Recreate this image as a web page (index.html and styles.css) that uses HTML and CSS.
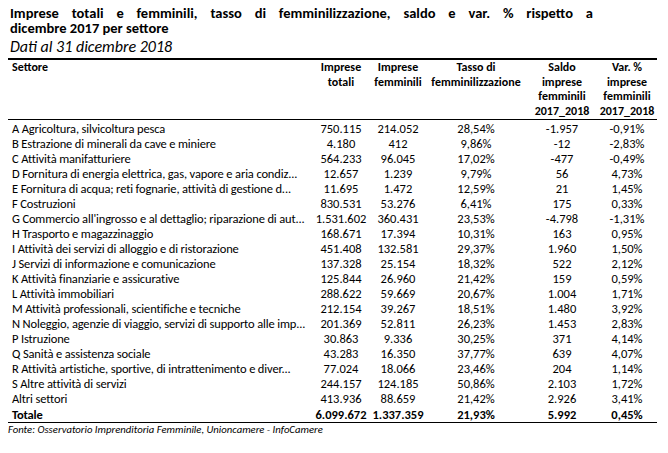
FILE: index.html
```html
<!DOCTYPE html>
<html lang="it">
<head>
<meta charset="utf-8">
<title>Imprese totali e femminili</title>
<link rel="stylesheet" href="styles.css">
</head>
<body>
<div class="page">
  <h1 class="title"><span class="title-line1">Imprese totali e femminili, tasso di femminilizzazione, saldo e var. % rispetto a</span><span class="title-line2">dicembre 2017 per settore</span></h1>
  <p class="subtitle">Dati al 31 dicembre 2018</p>
  <table class="data">
    <colgroup>
      <col class="c-set"><col class="c-tot"><col class="c-fem"><col class="c-tas"><col class="c-sal"><col class="c-var">
    </colgroup>
    <thead>
      <tr>
        <th class="h-set">Settore</th>
        <th>Imprese<br>totali</th>
        <th>Imprese<br>femminili</th>
        <th>Tasso di<br>femminilizzazione</th>
        <th>Saldo<br>imprese<br>femminili<br>2017_2018</th>
        <th>Var. %<br>imprese<br>femminili<br>2017_2018</th>
      </tr>
    </thead>
    <tbody>
      <tr><td>A Agricoltura, silvicoltura pesca</td><td>750.115</td><td>214.052</td><td>28,54%</td><td>-1.957</td><td>-0,91%</td></tr>
      <tr><td>B Estrazione di minerali da cave e miniere</td><td>4.180</td><td>412</td><td>9,86%</td><td>-12</td><td>-2,83%</td></tr>
      <tr><td>C Attività manifatturiere</td><td>564.233</td><td>96.045</td><td>17,02%</td><td>-477</td><td>-0,49%</td></tr>
      <tr><td>D Fornitura di energia elettrica, gas, vapore e aria condiz...</td><td>12.657</td><td>1.239</td><td>9,79%</td><td>56</td><td>4,73%</td></tr>
      <tr><td>E Fornitura di acqua; reti fognarie, attività di gestione d...</td><td>11.695</td><td>1.472</td><td>12,59%</td><td>21</td><td>1,45%</td></tr>
      <tr><td>F Costruzioni</td><td>830.531</td><td>53.276</td><td>6,41%</td><td>175</td><td>0,33%</td></tr>
      <tr><td>G Commercio all'ingrosso e al dettaglio; riparazione di aut...</td><td>1.531.602</td><td>360.431</td><td>23,53%</td><td>-4.798</td><td>-1,31%</td></tr>
      <tr><td>H Trasporto e magazzinaggio</td><td>168.671</td><td>17.394</td><td>10,31%</td><td>163</td><td>0,95%</td></tr>
      <tr><td>I Attività dei servizi di alloggio e di ristorazione</td><td>451.408</td><td>132.581</td><td>29,37%</td><td>1.960</td><td>1,50%</td></tr>
      <tr><td>J Servizi di informazione e comunicazione</td><td>137.328</td><td>25.154</td><td>18,32%</td><td>522</td><td>2,12%</td></tr>
      <tr><td>K Attività finanziarie e assicurative</td><td>125.844</td><td>26.960</td><td>21,42%</td><td>159</td><td>0,59%</td></tr>
      <tr><td>L Attività immobiliari</td><td>288.622</td><td>59.669</td><td>20,67%</td><td>1.004</td><td>1,71%</td></tr>
      <tr><td>M Attività professionali, scientifiche e tecniche</td><td>212.154</td><td>39.267</td><td>18,51%</td><td>1.480</td><td>3,92%</td></tr>
      <tr><td>N Noleggio, agenzie di viaggio, servizi di supporto alle imp...</td><td>201.369</td><td>52.811</td><td>26,23%</td><td>1.453</td><td>2,83%</td></tr>
      <tr><td>P Istruzione</td><td>30.863</td><td>9.336</td><td>30,25%</td><td>371</td><td>4,14%</td></tr>
      <tr><td>Q Sanità e assistenza sociale</td><td>43.283</td><td>16.350</td><td>37,77%</td><td>639</td><td>4,07%</td></tr>
      <tr><td>R Attività artistiche, sportive, di intrattenimento e diver...</td><td>77.024</td><td>18.066</td><td>23,46%</td><td>204</td><td>1,14%</td></tr>
      <tr><td>S Altre attività di servizi</td><td>244.157</td><td>124.185</td><td>50,86%</td><td>2.103</td><td>1,72%</td></tr>
      <tr><td>Altri settori</td><td>413.936</td><td>88.659</td><td>21,42%</td><td>2.926</td><td>3,41%</td></tr>
      <tr class="total"><td>Totale</td><td>6.099.672</td><td>1.337.359</td><td>21,93%</td><td>5.992</td><td>0,45%</td></tr>
    </tbody>
  </table>
  <p class="source">Fonte: Osservatorio Imprenditoria Femminile, Unioncamere - InfoCamere</p>
</div>
</body>
</html>
```

FILE: styles.css
```css
html, body {
  margin: 0;
  padding: 0;
  background: #ffffff;
  color: #000000;
}

.page {
  padding: 6px 11px 0 8px;
  font-family: Carlito, Lato, "Liberation Sans", sans-serif;
}

.title {
  margin: 0 0 0 2px;
  width: 583px;
  font-size: 14.5px;
  line-height: 15px;
  font-weight: bold;
}

.title-line1 {
  display: block;
  text-align: justify;
  text-align-last: justify;
}

.title-line2 {
  display: block;
}

.subtitle {
  margin: 2px 0 2px 2px;
  font-size: 16px;
  line-height: 18px;
  font-style: italic;
}

.data {
  width: 649px;
  border-collapse: collapse;
  table-layout: fixed;
  font-size: 12.5px;
  margin-top: 0;
}

.c-set { width: 303px; }
.c-tot { width: 60px; }
.c-fem { width: 54px; }
.c-tas { width: 102px; }
.c-sal { width: 70px; }
.c-var { width: 60px; }

.data thead tr {
  border-top: 2px solid #000;
  border-bottom: 1.5px solid #000;
}

.data th {
  font-weight: bold;
  font-size: 12px;
  text-align: center;
  vertical-align: top;
  line-height: 14.6px;
  padding: 0 0 1px 0;
  white-space: nowrap;
}

.data th.h-set {
  text-align: left;
  padding-left: 4px;
}

.data td {
  height: 15px;
  line-height: 15px;
  padding: 0;
  text-align: center;
  white-space: nowrap;
}

.data td:first-child {
  text-align: left;
  padding-left: 4px;
  letter-spacing: -0.15px;
  overflow: hidden;
}

.data tbody tr:first-child td {
  padding-top: 1px;
}

.data tr.total {
  font-weight: bold;
  border-bottom: 1.5px solid #000;
}

.data tr.total td {
  height: 16px;
}

.source {
  margin: 0;
  font-size: 10.7px;
  line-height: 14px;
  font-style: italic;
}
```
